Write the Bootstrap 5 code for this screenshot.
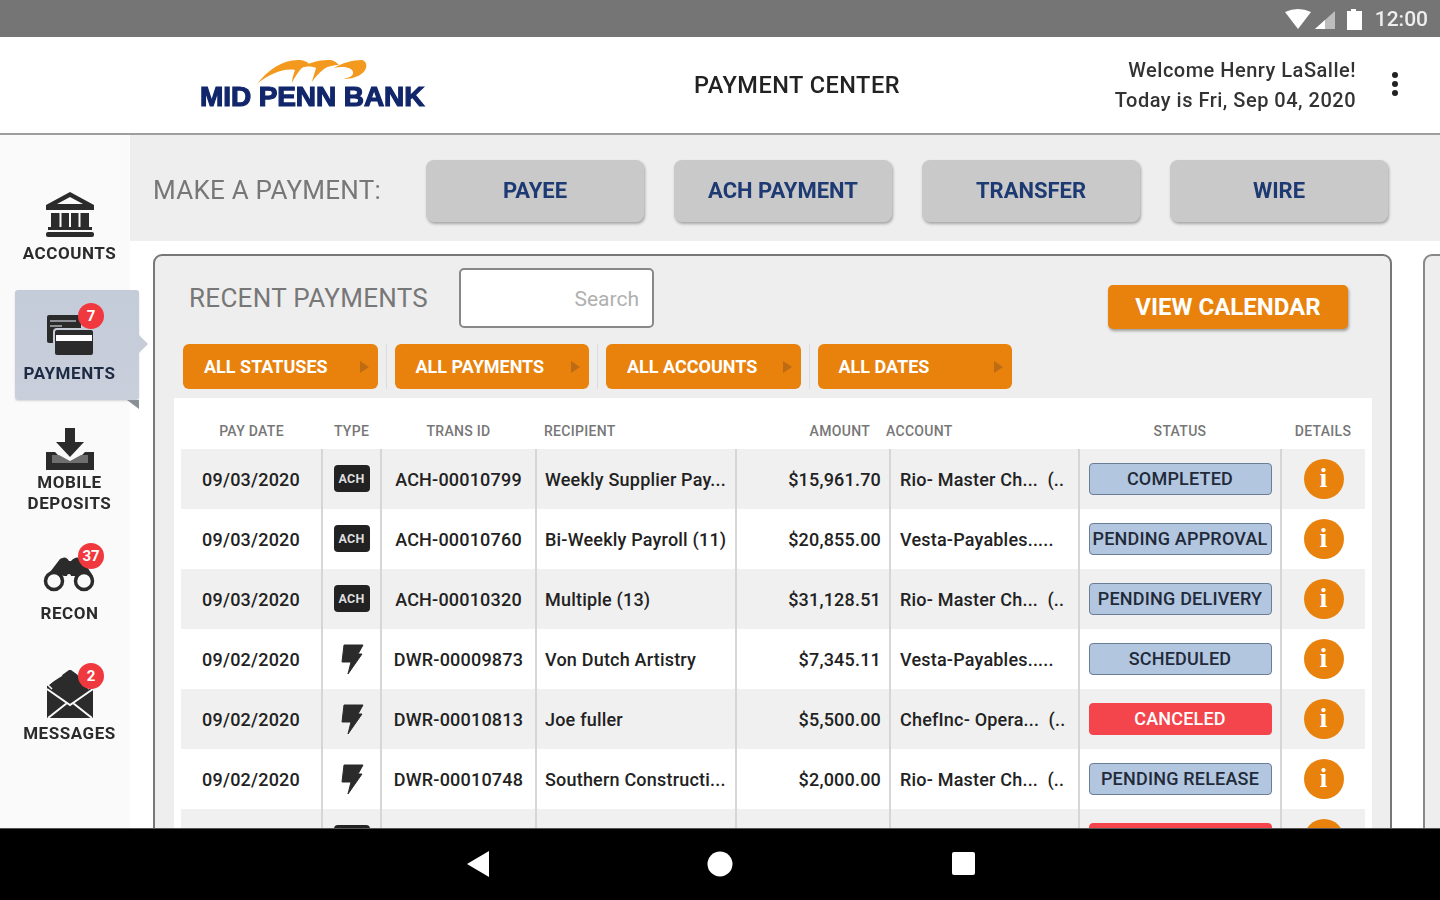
<!DOCTYPE html>
<html lang="en">
<head>
    <meta charset="UTF-8">
    <meta name="viewport" content="width=device-width, initial-scale=1.0">
    <title>Payment Center</title>
    <link href="https://cdn.jsdelivr.net/npm/bootstrap@5.3.0/dist/css/bootstrap.min.css" rel="stylesheet">
    <style>
        html, body { height: 100%; }
        body {
            font-family: Roboto, "Liberation Sans", sans-serif;
            background: #fff;
            overflow: hidden;
            height: 900px;
            filter: blur(.45px);
        }
        .os-status { height: 37px; background: #757575; color: #eee; font-size: 21px; font-weight: 500; padding: 2px 12px 0 0; }
        .app-head { height: 98px; background: #fff; border-bottom: 2px solid #9e9e9e; padding-left: 200px; }
        .logo-box { width: 224px; height: 60px; position: relative; margin-top: -2px; }
        .logo-box svg { position: absolute; left: 56px; top: 5px; }
        .logo-word {
            position: absolute; left: 0; bottom: 3px; white-space: nowrap;
            font-family: "Liberation Sans", sans-serif; font-weight: 700; font-size: 28px;
            color: #12266b; -webkit-text-stroke: 1.2px #12266b; letter-spacing: -.1px; line-height: 1;
        }
        .head-title { margin-left: 270px; font-size: 23.5px; font-weight: 500; color: #222; white-space: nowrap; letter-spacing: .5px; padding-top: 2px; }
        .head-user { margin-left: auto; text-align: right; font-size: 20px; font-weight: 500; line-height: 30px; color: #333; letter-spacing: .5px; }
        .head-dots { width: 84px; padding-left: 36px; padding-top: 1px; }
        .head-dots i { display: block; width: 6px; height: 6px; border-radius: 50%; background: #222; margin-bottom: 3px; }

        .app-body { height: 693px; }
        .side-rail { width: 130px; flex: none; background: #fafafa; padding-top: 35px; position: relative; z-index: 2; }
        .rail-item {
            width: 124px; height: 110px; margin: 0 0 10px 15px; padding: 18px 15px 0 0;
            text-align: center; position: relative; color: #333;
        }
        .rail-item svg { display: block; margin: 0 auto; }
        .rail-label { margin: 6px -10px 0; font-size: 17px; font-weight: 700; line-height: 18px; letter-spacing: .55px; color: #2b2b2b; }
        .rail-label.two-line { margin-top: 0; line-height: 21px; }
        .rail-item.is-active {
            background: linear-gradient(180deg, #c4ccd9, #c9cfdb); border-radius: 3px;
            box-shadow: 0 1px 2px rgba(0,0,0,.15);
        }
        .rail-item.is-active .rail-label { color: #1d2a44; }
        .rail-item.is-active::after {
            content: ""; position: absolute; left: 124px; top: 45px;
            border-left: 9px solid #c6cdd9; border-top: 9px solid transparent; border-bottom: 9px solid transparent;
        }
        .rail-item.is-active::before {
            content: ""; position: absolute; left: 112px; top: 110px;
            border-top: 9px solid #8b8f96; border-left: 12px solid transparent;
        }
        .rail-count {
            position: absolute; left: 63px; top: 13px; width: 26px; height: 26px; border-radius: 50%;
            background: #f0383f; color: #fff; font-size: 15px; font-weight: 700; line-height: 26px; text-align: center;
        }

        .work-col { min-width: 0; }
        .pay-bar { height: 106px; background: #eeeeee; padding: 5px 0 0 23px; }
        .pay-bar-label { width: 273px; font-size: 26px; color: #777; white-space: nowrap; letter-spacing: .25px; }
        .pay-btn {
            width: 218px; height: 62px; margin-right: 30px; border: 0; border-radius: 8px; padding: 0;
            background: #c9c9c9; color: #1d3a72; font-size: 22px; font-weight: 700;
            box-shadow: 1px 2px 3px rgba(0,0,0,.3);
        }
        .pay-btn:hover { background: #c9c9c9; color: #1d3a72; }

        .panel-row { padding: 13px 0 0 23px; height: 587px; overflow: hidden; gap: 31px; }
        .pay-panel {
            width: 1239px; flex: none; height: 620px; background: #eeeeee;
            border: 2px solid #777; border-radius: 9px;
        }
        .ghost-panel { width: 60px; flex: none; height: 620px; border: 2px solid #888; border-radius: 9px; background: #eee; }
        .panel-top { padding: 12px 42px 0 34px; height: 88px; }
        .panel-title { width: 270px; font-size: 26px; color: #777; line-height: 60px; white-space: nowrap; letter-spacing: .3px; }
        .search-box.form-control {
            width: 195px; height: 60px; border: 2px solid #888; border-radius: 5px; background: #fff;
            text-align: right; font-size: 21px; padding: 2px 13px 0; color: #aaa;
        }
        .search-box::placeholder { color: #b0b0b0; }
        .calendar-btn {
            width: 240px; height: 44px; margin: 17px 0 0 auto; padding: 0; border: 0; border-radius: 5px;
            background: #e8820c; color: #fff; font-size: 24px; font-weight: 700;
            box-shadow: 1px 2px 3px rgba(0,0,0,.35);
        }
        .calendar-btn:hover { background: #e8820c; color: #fff; }
        .filter-row { padding-left: 28px; gap: 17px; height: 45px; margin-bottom: 9px; }
        .filter-btn {
            position: relative; width: 194.5px; height: 45px; padding: 0 9px 0 21px; border: 0; border-radius: 6px;
            background: #e8820c; color: #fff; font-size: 18px; font-weight: 700;
        }
        .filter-btn:hover { background: #e8820c; color: #fff; }
        .filter-btn i {
            display: block; border-left: 9px solid #bd6c14; border-top: 6px solid transparent; border-bottom: 6px solid transparent;
        }
        .filter-btn + .filter-btn::before {
            content: ""; position: absolute; left: -9px; top: 0; bottom: 0; border-left: 1px solid #dcdcdc;
        }
        .table-sheet { margin: 0 18px 0 19px; background: #fff; padding: 12px 7px 0; }
        .pay-table { table-layout: fixed; width: 1184px; margin: 0; border-collapse: collapse; }
        .pay-table th {
            height: 39px; padding: 4px 0 0; border: 0; font-size: 14px; font-weight: 500; color: #777;
            vertical-align: middle; background: #fff; letter-spacing: .3px;
        }
        .pay-table td {
            height: 60px; padding: 0; border: 0; border-left: 2px solid #d6d6d6;
            font-size: 18px; font-weight: 500; color: #222; vertical-align: middle; white-space: nowrap;
            letter-spacing: .2px; background: #fff;
        }
        .pay-table td:first-child { border-left: 0; }
        .pay-table tbody tr:nth-child(odd) td { background: #f0f0f0; }
        .th-account { text-indent: -4px; }
        .cell-recipient { padding-left: 8px !important; }
        .cell-amount { padding-right: 8px !important; }
        .cell-account { padding-left: 9px !important; overflow: hidden; }
        .ach-chip {
            display: inline-block; width: 36px; height: 27px; background: #222; border-radius: 4px; vertical-align: middle;
            color: #ddd; font-size: 12.5px; font-weight: 700; line-height: 27px; text-align: center; letter-spacing: .3px;
            position: relative; top: -1px;
        }
        .bolt-mark { display: block; margin: 1px auto 0; transform: translateX(1px); }
        .status-pill {
            width: 183px; height: 32px; margin: 0 auto; border: 1px solid #6c7d96; border-radius: 4px;
            background: #b3c6df; color: #1f2a3a; font-size: 18px; line-height: 30px; text-align: center; overflow: hidden;
        }
        .status-pill.is-cancel { background: #f4454d; border-color: #f4454d; color: #fff; }
        .info-dot {
            width: 40px; height: 40px; margin: 0 auto; border-radius: 50%; background: #e8820c; color: #fff;
            font-family: "Liberation Serif", serif; font-size: 28px; font-weight: 700; line-height: 37px; text-align: center;
        }
        .os-nav { height: 72px; background: #000; border-top: 1px solid #555; }
    </style>
</head>
<body>
    <div class="os-status d-flex align-items-center justify-content-end">
        <svg width="140" height="24" viewBox="0 0 140 24" class="me-1">
            <path d="M54 4 Q67 -2 80 4 L67 21 Z" fill="#fff"/>
            <path d="M84 21 L104 3 V21 Z" fill="#bdbdbd"/>
            <path d="M84 21 L94 12 V21 Z" fill="#fff"/>
            <path d="M116 3 H120 V1 H125 V3 H131 V22 H116 Z" fill="#fff"/>
        </svg>
        <span>12:00</span>
    </div>

    <header class="app-head d-flex align-items-center">
        <div class="logo-box flex-shrink-0">
            <svg width="112" height="28" viewBox="0 0 112 28">
                <path d="M1 25 C12 11 26 1 42 1 C48 1 52 3 54 6 C50 6 46 8 44 11 C41 15 38 19 36 24 C36 19 38 14 39 11 C28 9 13 15 1 25 Z" fill="#f39a1e"/>
                <path d="M45 9 C52 4 62 1 72 1 C78 1 80 3 83 6 C78 6 72 7 68 10 C63 14 59 18 56 23 C57 18 59 13 60 9 C56 7 50 7 45 9 Z" fill="#f39a1e"/>
                <path d="M78 9 C86 4 96 1 106 1 C110 2 111 6 110 9 C108 15 100 20 87 20 C92 19 98 17 97 13 C96 8 86 7 78 9 Z" fill="#f39a1e"/>
            </svg>
            <span class="logo-word">MID PENN BANK</span>
        </div>
        <div class="head-title">PAYMENT CENTER</div>
        <div class="head-user">Welcome Henry LaSalle!<br>Today is Fri, Sep 04, 2020</div>
        <div class="head-dots"><i></i><i></i><i></i></div>
    </header>

    <div class="app-body d-flex">
        <nav class="side-rail">
            <div class="rail-item">
                <svg width="60" height="50" viewBox="0 0 60 50">
                    <path d="M30 4 L54 17 V22 H6 V17 Z" fill="#2b2b2b"/>
                    <path d="M30 9 L43 16 H17 Z" fill="#fafafa"/>
                    <rect x="11" y="25" width="38" height="14" fill="#2b2b2b"/>
                    <path d="M20.5 25 V39 M30 25 V39 M39.5 25 V39" stroke="#fafafa" stroke-width="2"/>
                    <rect x="8" y="39" width="44" height="3" fill="#2b2b2b"/>
                    <rect x="6" y="44" width="48" height="5" rx="2" fill="#2b2b2b"/>
                </svg>
                <div class="rail-label">ACCOUNTS</div>
            </div>
            <div class="rail-item is-active">
                <svg width="60" height="50" viewBox="0 0 60 50">
                    <rect x="7" y="7" width="34" height="28" rx="2" fill="#2b2b2b"/>
                    <path d="M10 13 H36 M10 18 H22" stroke="#8c8f95" stroke-width="2"/>
                    <rect x="14" y="21" width="40" height="27" rx="3" fill="#2b2b2b" stroke="#c6cdd9" stroke-width="2"/>
                    <rect x="16" y="27" width="36" height="6" fill="#fff"/>
                </svg>
                <div class="rail-label">PAYMENTS</div>
                <span class="rail-count">7</span>
            </div>
            <div class="rail-item">
                <svg width="60" height="44" viewBox="0 0 60 44">
                    <path d="M25 0 H35 V14 H44 L30 29 L16 14 H25 Z" fill="#2b2b2b"/>
                    <path d="M6 24 H15 L18 27 H12 V35 H48 V27 H42 L45 24 H54 V42 H6 Z" fill="#2b2b2b"/>
                    <path d="M12 27 H19 L30 33 L41 27 H48 V35 H12 Z" fill="#6e6e6e"/>
                </svg>
                <div class="rail-label two-line">MOBILE<br>DEPOSITS</div>
            </div>
            <div class="rail-item">
                <svg width="60" height="50" viewBox="0 0 60 50">
                    <path d="M7 28 L20 11 Q26 7 29 13 L31 13 Q36 7 42 11 L53 28 L44 25 L36 28 H24 L14 25 Z" fill="#2b2b2b"/>
                    <circle cx="14" cy="33" r="8.5" fill="#fafafa" stroke="#2b2b2b" stroke-width="3.5"/>
                    <circle cx="44" cy="33" r="8.5" fill="#fafafa" stroke="#2b2b2b" stroke-width="3.5"/>
                    <circle cx="29" cy="28" r="2" fill="#fafafa"/>
                </svg>
                <div class="rail-label">RECON</div>
                <span class="rail-count">37</span>
            </div>
            <div class="rail-item">
                <svg width="60" height="50" viewBox="0 0 60 50">
                    <path d="M7 18 L29 2 L31 2 L53 18 V50 H7 Z" fill="#2b2b2b"/>
                    <path d="M12 21 L8 17 L14 12 M46 12 L52 17 L48 21 M14 12 L22 7 M38 7 L46 12" fill="none" stroke="#fafafa" stroke-width="1.5"/>
                    <path d="M7 21 L30 37 L53 21 M8 50 L27 35 M52 50 L33 35" fill="none" stroke="#fafafa" stroke-width="2"/>
                </svg>
                <div class="rail-label">MESSAGES</div>
                <span class="rail-count">2</span>
            </div>
        </nav>

        <main class="work-col flex-grow-1">
            <div class="pay-bar d-flex align-items-center">
                <div class="pay-bar-label">MAKE A PAYMENT:</div>
                <button type="button" class="btn pay-btn">PAYEE</button>
                <button type="button" class="btn pay-btn">ACH PAYMENT</button>
                <button type="button" class="btn pay-btn">TRANSFER</button>
                <button type="button" class="btn pay-btn">WIRE</button>
            </div>

            <div class="panel-row d-flex">
                <section class="pay-panel">
                    <div class="panel-top d-flex align-items-start">
                        <div class="panel-title">RECENT PAYMENTS</div>
                        <input type="text" class="form-control search-box" placeholder="Search">
                        <button type="button" class="btn calendar-btn">VIEW CALENDAR</button>
                    </div>
                    <div class="filter-row d-flex">
                        <button type="button" class="btn filter-btn d-flex align-items-center justify-content-between">ALL STATUSES<i></i></button>
                        <button type="button" class="btn filter-btn d-flex align-items-center justify-content-between">ALL PAYMENTS<i></i></button>
                        <button type="button" class="btn filter-btn d-flex align-items-center justify-content-between">ALL ACCOUNTS<i></i></button>
                        <button type="button" class="btn filter-btn d-flex align-items-center justify-content-between">ALL DATES<i></i></button>
                    </div>
                    <div class="table-sheet">
                        <table class="table pay-table">
                            <colgroup>
                                <col style="width:141px"><col style="width:59px"><col style="width:155px"><col style="width:200px">
                                <col style="width:154px"><col style="width:189px"><col style="width:202px"><col style="width:84px">
                            </colgroup>
                            <thead>
                                <tr>
                                    <th class="text-center">PAY DATE</th>
                                    <th class="text-center">TYPE</th>
                                    <th class="text-center">TRANS ID</th>
                                    <th class="cell-recipient">RECIPIENT</th>
                                    <th class="text-end" style="padding-right:20px">AMOUNT</th>
                                    <th class="th-account">ACCOUNT</th>
                                    <th class="text-center">STATUS</th>
                                    <th class="text-center">DETAILS</th>
                                </tr>
                            </thead>
                            <tbody>
                                <tr>
                                    <td class="text-center">09/03/2020</td>
                                    <td class="text-center"><span class="ach-chip">ACH</span></td>
                                    <td class="text-center">ACH-00010799</td>
                                    <td class="cell-recipient">Weekly Supplier Pay...</td>
                                    <td class="text-end cell-amount">$15,961.70</td>
                                    <td class="cell-account">Rio- Master Ch...&nbsp;&nbsp;(..</td>
                                    <td><div class="status-pill">COMPLETED</div></td>
                                    <td><div class="info-dot">i</div></td>
                                </tr>
                                <tr>
                                    <td class="text-center">09/03/2020</td>
                                    <td class="text-center"><span class="ach-chip">ACH</span></td>
                                    <td class="text-center">ACH-00010760</td>
                                    <td class="cell-recipient">Bi-Weekly Payroll (11)</td>
                                    <td class="text-end cell-amount">$20,855.00</td>
                                    <td class="cell-account">Vesta-Payables.....</td>
                                    <td><div class="status-pill">PENDING APPROVAL</div></td>
                                    <td><div class="info-dot">i</div></td>
                                </tr>
                                <tr>
                                    <td class="text-center">09/03/2020</td>
                                    <td class="text-center"><span class="ach-chip">ACH</span></td>
                                    <td class="text-center">ACH-00010320</td>
                                    <td class="cell-recipient">Multiple (13)</td>
                                    <td class="text-end cell-amount">$31,128.51</td>
                                    <td class="cell-account">Rio- Master Ch...&nbsp;&nbsp;(..</td>
                                    <td><div class="status-pill">PENDING DELIVERY</div></td>
                                    <td><div class="info-dot">i</div></td>
                                </tr>
                                <tr>
                                    <td class="text-center">09/02/2020</td>
                                    <td class="text-center"><svg class="bolt-mark" width="24" height="32" viewBox="0 0 24 32"><path d="M3 1 H22 L17 10 H21 L7 30 L10 18 H1 Z" fill="#2b2b2b" stroke="#2b2b2b" stroke-linejoin="round"/></svg></td>
                                    <td class="text-center">DWR-00009873</td>
                                    <td class="cell-recipient">Von Dutch Artistry</td>
                                    <td class="text-end cell-amount">$7,345.11</td>
                                    <td class="cell-account">Vesta-Payables.....</td>
                                    <td><div class="status-pill">SCHEDULED</div></td>
                                    <td><div class="info-dot">i</div></td>
                                </tr>
                                <tr>
                                    <td class="text-center">09/02/2020</td>
                                    <td class="text-center"><svg class="bolt-mark" width="24" height="32" viewBox="0 0 24 32"><path d="M3 1 H22 L17 10 H21 L7 30 L10 18 H1 Z" fill="#2b2b2b" stroke="#2b2b2b" stroke-linejoin="round"/></svg></td>
                                    <td class="text-center">DWR-00010813</td>
                                    <td class="cell-recipient">Joe fuller</td>
                                    <td class="text-end cell-amount">$5,500.00</td>
                                    <td class="cell-account">ChefInc- Opera...&nbsp;&nbsp;(..</td>
                                    <td><div class="status-pill is-cancel">CANCELED</div></td>
                                    <td><div class="info-dot">i</div></td>
                                </tr>
                                <tr>
                                    <td class="text-center">09/02/2020</td>
                                    <td class="text-center"><svg class="bolt-mark" width="24" height="32" viewBox="0 0 24 32"><path d="M3 1 H22 L17 10 H21 L7 30 L10 18 H1 Z" fill="#2b2b2b" stroke="#2b2b2b" stroke-linejoin="round"/></svg></td>
                                    <td class="text-center">DWR-00010748</td>
                                    <td class="cell-recipient">Southern Constructi...</td>
                                    <td class="text-end cell-amount">$2,000.00</td>
                                    <td class="cell-account">Rio- Master Ch...&nbsp;&nbsp;(..</td>
                                    <td><div class="status-pill">PENDING RELEASE</div></td>
                                    <td><div class="info-dot">i</div></td>
                                </tr>
                                <tr>
                                    <td></td>
                                    <td class="text-center"><span class="ach-chip">ACH</span></td>
                                    <td></td>
                                    <td></td>
                                    <td></td>
                                    <td></td>
                                    <td><div class="status-pill is-cancel">CANCELED</div></td>
                                    <td><div class="info-dot">i</div></td>
                                </tr>
                            </tbody>
                        </table>
                    </div>
                </section>
                <div class="ghost-panel"></div>
            </div>
        </main>
    </div>

    <footer class="os-nav d-flex align-items-center">
        <svg class="flex-shrink-0" width="1440" height="30" viewBox="0 0 1440 30">
            <path d="M467 14 L489 1 V27 Z" fill="#fff"/>
            <circle cx="720" cy="14" r="12.5" fill="#fff"/>
            <rect x="952" y="2" width="23" height="23" rx="2" fill="#fff"/>
        </svg>
    </footer>
    <script src="https://cdn.jsdelivr.net/npm/bootstrap@5.3.0/dist/js/bootstrap.bundle.min.js"></script>
</body>
</html>
